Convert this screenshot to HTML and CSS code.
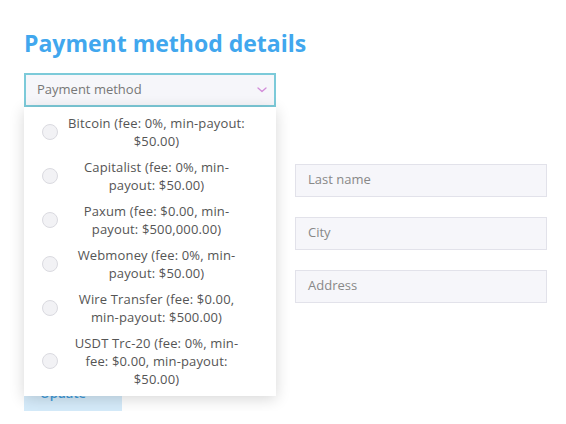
FILE: index.html
```html
<!DOCTYPE html>
<html>
<head>
<meta charset="utf-8">
<link rel="stylesheet" href="styles.css">
</head>
<body>
<div class="page">
  <h1 class="title">Payment method details</h1>
  <div class="select-wrap">
    <div class="select">
      <span class="select-label">Payment method</span>
      <svg class="chevron" width="10" height="6" viewBox="0 0 10 6"><path d="M1 1 L5 4.6 L9 1" fill="none" stroke="#d28cd9" stroke-width="1.3" stroke-linecap="round" stroke-linejoin="round"/></svg>
    </div>
    <ul class="menu">
      <li class="option"><span class="radio"></span><span class="opt-text">Bitcoin (fee: 0%, min-payout: $50.00)</span></li>
      <li class="option"><span class="radio"></span><span class="opt-text">Capitalist (fee: 0%, min-payout: $50.00)</span></li>
      <li class="option"><span class="radio"></span><span class="opt-text">Paxum (fee: $0.00, min-payout: $500,000.00)</span></li>
      <li class="option"><span class="radio"></span><span class="opt-text">Webmoney (fee: 0%, min-payout: $50.00)</span></li>
      <li class="option"><span class="radio"></span><span class="opt-text">Wire Transfer (fee: $0.00, min-payout: $500.00)</span></li>
      <li class="option"><span class="radio"></span><span class="opt-text">USDT Trc-20 (fee: 0%, min-fee: $0.00, min-payout: $50.00)</span></li>
    </ul>
  </div>
  <div class="grid">
    <div class="field r2">Last name</div>
    <div class="field r3">City</div>
    <div class="field r4">Address</div>
  </div>
  <button class="btn">Update</button>
</div>
</body>
</html>
```
FILE: styles.css
```css
* { box-sizing: border-box; }
html, body { margin: 0; padding: 0; background: #fff; }
body { font-family: "Open Sans", "Liberation Sans", sans-serif; }
.page { padding: 28px 0 0 24px; width: 566px; }
.title {
  margin: 0 0 15px 0;
  font-size: 23px;
  line-height: 30px;
  font-weight: 700;
  color: #41a7ee;
}
.select-wrap { position: relative; width: 252px; }
.select {
  height: 34px;
  border: 2px solid #7ccad9;
  background: #f6f6fa;
  display: flex;
  align-items: center;
  justify-content: space-between;
  padding: 0 7px 2px 11px;
}
.select-label { font-size: 13px; color: #777; }
.chevron { margin-top: 2px; }
.menu {
  position: absolute;
  left: 0; top: 34px;
  width: 252px;
  margin: 0; padding: 7px 0 8px;
  list-style: none;
  background: #fff;
  box-shadow: 0 3px 14px rgba(0,0,0,0.16);
  z-index: 2;
}
.option {
  display: flex;
  align-items: center;
  padding: 0 0 0 18px;
  margin-bottom: 8px;
}
.option:last-child { margin-bottom: 0; }
.radio {
  flex: none;
  width: 16px; height: 16px;
  border-radius: 50%;
  background: #f2f2f5;
  border: 1px solid #dadae0;
}
.opt-text {
  flex: none;
  width: 181px;
  margin-left: 8px;
  text-align: center;
  font-size: 13px;
  letter-spacing: 0.15px;
  line-height: 18px;
  color: #555;
}
.grid {
  display: grid;
  grid-template-columns: 252px 252px;
  column-gap: 19px;
  grid-auto-rows: 33px;
  row-gap: 20px;
  margin-top: 4px;
}
.field {
  grid-column: 2;
  height: 33px;
  background: #f6f6fa;
  border: 1px solid #e2e2ea;
  font-size: 13px;
  color: #888;
  display: flex;
  align-items: center;
  padding: 0 0 3px 12px;
}
.r2 { grid-row: 2; }
.r3 { grid-row: 3; }
.r4 { grid-row: 4; }
.btn {
  display: block;
  margin-top: 72px;
  width: 98px; height: 36px;
  border: 0;
  background: #d5ebfa;
  color: #3f9ad9;
  font-family: inherit;
  font-size: 13px;
  font-weight: 600;
  text-align: left;
  padding: 0 0 0 16px;
}
```
